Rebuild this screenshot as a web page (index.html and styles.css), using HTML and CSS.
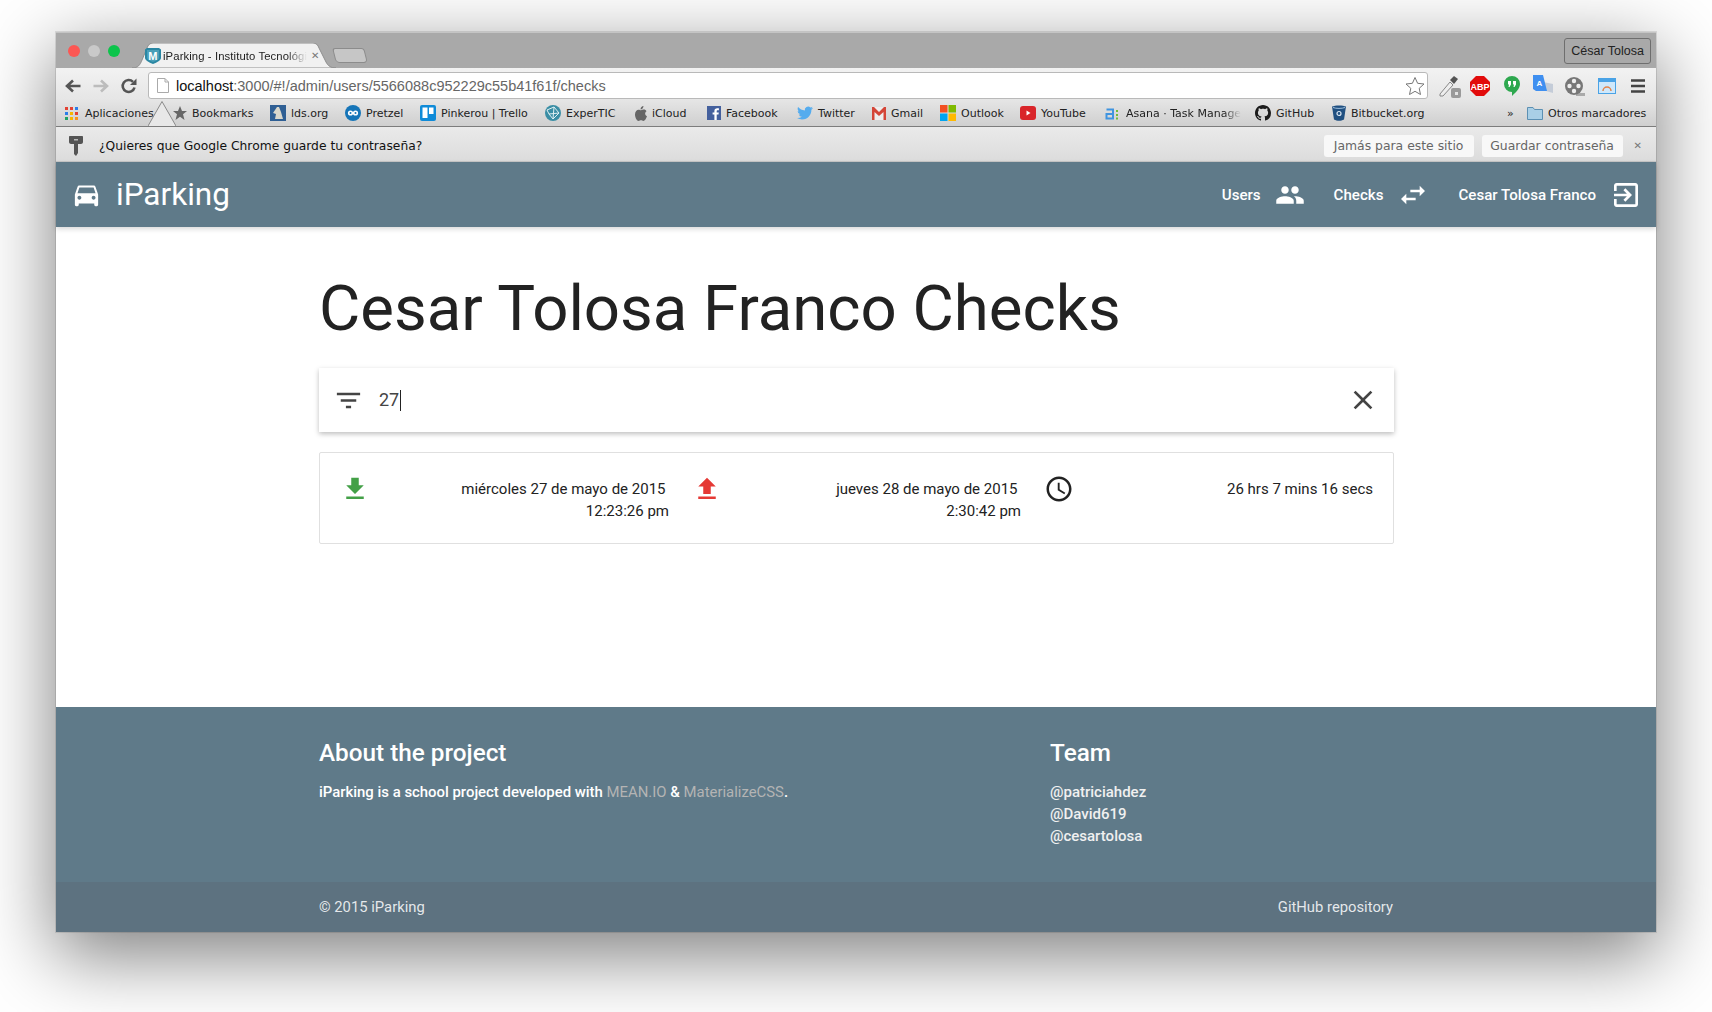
FILE: index.html
```html
<!DOCTYPE html>
<html lang="en">
<head>
    <meta charset="UTF-8">
    <meta name="viewport" content="width=device-width, initial-scale=1.0">
    <title>iParking - Instituto Tecnológico</title>
    <link rel="stylesheet" href="styles.css">
</head>
<body>
    <div class="window">
        <!-- browser chrome -->
        <div class="tabstrip">
            <div class="lights">
                <span class="light light-red"></span>
                <span class="light light-gray"></span>
                <span class="light light-green"></span>
            </div>
            <div class="tab">
                <svg class="tab-shape" viewBox="0 0 204 25" preserveAspectRatio="none"><path d="M0 25C6 25 8 22 10 17L15 5C16 2 18 0 21 0H181C184 0 186 2 187 5L194 19C196 23 199 25 204 25Z" fill="#f1f1f1" stroke="#8f8f8f"/></svg>
                <svg class="favicon" viewBox="0 0 16 16"><path d="M0 1.5L2 0H14L16 1.500V10C16 12.500 11 15 8 16C5 15 0 12.500 0 10Z" fill="#2a87a3"/><path d="M2 2H14V10C14 11.500 10.500 13 8 14C5.500 13 2 11.500 2 10Z" fill="#4a9fb8"/><text x="8" y="11.500" text-anchor="middle" class="favicon-letter">M</text></svg>
                <span class="tab-title">iParking - Instituto Tecnológi</span>
                <span class="tab-close">✕</span>
            </div>
            <div class="new-tab"></div>
            <div class="profile">César Tolosa</div>
        </div>

        <div class="toolbar">
            <button class="nav-btn">
                <svg viewBox="0 0 18 18" width="18" height="18"><path d="M16.500 9H4M9 3.500L3 9l6 5.500" fill="none" stroke="#555" stroke-width="2.600"/></svg>
            </button>
            <button class="nav-btn">
                <svg viewBox="0 0 18 18" width="18" height="18"><path d="M1.500 9H14M9 3.500L15 9l-6 5.500" fill="none" stroke="#bcbcbc" stroke-width="2.600"/></svg>
            </button>
            <button class="nav-btn">
                <svg viewBox="0 0 18 18" width="18" height="18"><path d="M14.500 10.500A6 6 0 1 1 13 4.800" fill="none" stroke="#555" stroke-width="2.600"/><path d="M16.500 1.500V8H10Z" fill="#555"/></svg>
            </button>
            <div class="omnibox">
                <svg class="page-icon" viewBox="0 0 12 15" width="12" height="15"><path d="M.5.500H8L11.500 4V14.500H.5Z" fill="#fff" stroke="#aaa"/><path d="M8 .5V4H11.500" fill="none" stroke="#aaa"/></svg>
                <span class="url"><b>localhost</b>:3000/#!/admin/users/5566088c952229c55b41f61f/checks</span>
                <svg class="star" viewBox="0 0 20 20" width="20" height="20"><path d="M10 1.500L12.600 7.300 19 8 14.200 12.300 15.500 18.500 10 15.300 4.500 18.500 5.800 12.300 1 8 7.400 7.300Z" fill="#fff" stroke="#777"/></svg>
            </div>
            <div class="extensions">
                <span class="ext"><svg viewBox="0 0 24 24" width="24" height="24"><path d="M3 20L13 8l3 3L6 22H3Z" fill="#eee" stroke="#888"/><path d="M13 6l4-4 4 3-4 5Z" fill="#555"/><rect x="14" y="14" width="10" height="10" rx="2" fill="#9a9a9a"/><rect x="18" y="18" width="3" height="3" fill="#e4e4e4"/></svg></span>
                <span class="ext"><svg viewBox="0 0 20 20" width="20" height="20"><path d="M6 0H14L20 6V14L14 20H6L0 14V6Z" fill="#e20b0b"/><text x="10" y="13.500" text-anchor="middle" class="abp-label">ABP</text></svg></span>
                <span class="ext"><svg viewBox="0 0 16 20" width="16" height="20"><path d="M8 0A8 8 0 0 1 16 8C16 13 11 17 8 20V16A8 8 0 0 1 8 0Z" fill="#2ea84f"/><path d="M4 5h3v3.500L5.500 11H4.500L5 8.500H4ZM9 5h3v3.500L10.500 11H9.500L10 8.500H9Z" fill="#fff"/></svg></span>
                <span class="ext"><svg viewBox="0 0 20 22" width="20" height="22"><path d="M10 7L20 9V18L13 16Z" fill="#c4ccd8"/><path d="M0 0H10L14 16H3L0 14Z" fill="#3f8ff0"/><text x="6.500" y="10.500" text-anchor="middle" class="translate-label">A</text></svg></span>
                <span class="ext"><svg viewBox="0 0 22 22" width="22" height="22"><path d="M12 18H21V21H12Z" fill="#aaa"/><circle cx="10" cy="11" r="9" fill="#777"/><circle cx="10" cy="6" r="2.200" fill="#eee"/><circle cx="10" cy="16" r="2.200" fill="#eee"/><circle cx="5.500" cy="11" r="2.200" fill="#eee"/><circle cx="14.500" cy="11" r="2.200" fill="#eee"/></svg></span>
                <span class="ext"><svg viewBox="0 0 18 16" width="18" height="16"><rect x=".5" y=".5" width="17" height="15" fill="#cfe8fb" stroke="#4aa3e6"/><rect x="0" y="0" width="18" height="4" fill="#4aa3e6"/><path d="M5 13A4 4 0 0 1 13 13" fill="none" stroke="#e2844a" stroke-width="1.500"/></svg></span>
                <span class="ext"><svg viewBox="0 0 14 14" width="14" height="14"><path d="M0 1.500H14M0 7H14M0 12.500H14" stroke="#444" stroke-width="2.600"/></svg></span>
            </div>
        </div>

        <div class="bookmarks">
            <div class="bm bm-apps">
                <svg class="bm-icon" viewBox="0 0 13 13" width="13" height="13"><path d="M0 0h3v3H0Z" fill="#e34133"/><path d="M5 0h3v3H5Z" fill="#e34133"/><path d="M10 0h3v3h-3Z" fill="#2b7de9"/><path d="M0 5h3v3H0Z" fill="#2b7de9"/><path d="M5 5h3v3H5Z" fill="#f7b500"/><path d="M10 5h3v3h-3Z" fill="#e34133"/><path d="M0 10h3v3H0Z" fill="#1fa463"/><path d="M5 10h3v3H5Z" fill="#f7b500"/><path d="M10 10h3v3h-3Z" fill="#f7941d"/></svg>
                <span>Aplicaciones</span>
            </div>
            <div class="bm">
                <svg class="bm-icon" viewBox="0 0 14 14" width="14" height="14"><path d="M7 0L9 5H14L10 8.300 11.500 14 7 10.700 2.500 14 4 8.300 0 5H5Z" fill="#666"/></svg>
                <span>Bookmarks</span>
            </div>
            <div class="bm">
                <svg class="bm-icon" viewBox="0 0 16 16" width="16" height="16"><rect width="16" height="16" fill="#2f5f94"/><path d="M7 2h2l2 5 2 7H5l1-5-3-1Z" fill="#d9d7cc"/></svg>
                <span>lds.org</span>
            </div>
            <div class="bm">
                <svg class="bm-icon" viewBox="0 0 16 16" width="16" height="16"><circle cx="8" cy="8" r="8" fill="#1675b8"/><circle cx="5.500" cy="8" r="2.600" fill="#fff"/><circle cx="10.500" cy="8" r="2.600" fill="#fff"/><circle cx="5.500" cy="8" r="1" fill="#1675b8"/><circle cx="10.500" cy="8" r="1" fill="#1675b8"/></svg>
                <span>Pretzel</span>
            </div>
            <div class="bm">
                <svg class="bm-icon" viewBox="0 0 16 16" width="16" height="16"><rect width="16" height="16" rx="2" fill="#0f8bd8"/><rect x="2.500" y="2.500" width="5" height="10.500" fill="#fff"/><rect x="9" y="2.500" width="4.500" height="6.500" fill="#fff"/></svg>
                <span>Pinkerou | Trello</span>
            </div>
            <div class="bm">
                <svg class="bm-icon" viewBox="0 0 16 16" width="16" height="16"><circle cx="8" cy="8" r="8" fill="#3a8ea5"/><path d="M2 5L9 2l5 6-6 6-4-5Zm7-3L8 14M4 9l10-1" fill="none" stroke="#dff0f3"/></svg>
                <span>ExperTIC</span>
            </div>
            <div class="bm">
                <svg class="bm-icon" viewBox="0 0 12 15" width="12" height="15"><path d="M8.500 0C8.500 2 7 3.500 5.500 3.400 5.500 1.500 7 .2 8.500 0ZM6 4.200C7 4.200 7.700 3.600 8.800 3.600 10 3.600 11 4.300 11.500 5.200 9.500 6.500 9.800 9.300 12 10.200 11.300 12.200 9.800 15 8.400 15 7.400 15 7 14.300 6 14.300 5 14.300 4.500 15 3.600 15 2 15 0 11.500 0 8.500 0 5.500 1.900 3.700 3.600 3.700 4.700 3.700 5.300 4.200 6 4.200Z" fill="#666"/></svg>
                <span>iCloud</span>
            </div>
            <div class="bm">
                <svg class="bm-icon" viewBox="0 0 14 14" width="14" height="14"><rect width="14" height="14" fill="#44609d"/><path d="M9.700 14V8.600H11.500L11.800 6.500H9.700V5.200C9.700 4.600 9.900 4.200 10.700 4.200H11.900V2.300C11.700 2.300 11 2.200 10.200 2.200 8.500 2.200 7.400 3.200 7.400 5V6.500H5.600V8.600H7.400V14Z" fill="#fff"/></svg>
                <span>Facebook</span>
            </div>
            <div class="bm">
                <svg class="bm-icon" viewBox="0 0 24 24" width="16" height="16"><path d="M23.953 4.57a10 10 0 01-2.825.775 4.958 4.958 0 002.163-2.723c-.951.555-2.005.959-3.127 1.184a4.92 4.92 0 00-8.384 4.482C7.69 8.095 4.067 6.13 1.64 3.162a4.822 4.822 0 00-.666 2.475c0 1.71.87 3.213 2.188 4.096a4.904 4.904 0 01-2.228-.616v.06a4.923 4.923 0 003.946 4.827 4.996 4.996 0 01-2.212.085 4.936 4.936 0 004.604 3.417 9.867 9.867 0 01-6.102 2.105c-.39 0-.779-.023-1.17-.067a13.995 13.995 0 007.557 2.209c9.053 0 13.998-7.496 13.998-13.985 0-.21 0-.42-.015-.63A9.935 9.935 0 0024 4.59z" fill="#55acee"/></svg>
                <span>Twitter</span>
            </div>
            <div class="bm">
                <svg class="bm-icon" viewBox="0 0 14 13" width="14" height="13"><rect width="14" height="13" fill="#eee"/><path d="M0 0H2L7 5 12 0H14V13H11.500V5L7 9 2.500 5V13H0Z" fill="#d44638"/></svg>
                <span>Gmail</span>
            </div>
            <div class="bm">
                <svg class="bm-icon" viewBox="0 0 16 16" width="16" height="16"><rect width="7.500" height="7.500" fill="#f25022"/><rect x="8.500" width="7.500" height="7.500" fill="#7fba00"/><rect y="8.500" width="7.500" height="7.500" fill="#00a4ef"/><rect x="8.500" y="8.500" width="7.500" height="7.500" fill="#ffb900"/></svg>
                <span>Outlook</span>
            </div>
            <div class="bm">
                <svg class="bm-icon" viewBox="0 0 16 14" width="16" height="14"><rect width="16" height="14" rx="3" fill="#d9252a"/><path d="M6.500 4.500L10.500 7 6.500 9.500Z" fill="#fff"/></svg>
                <span>YouTube</span>
            </div>
            <div class="bm">
                <svg class="bm-icon" viewBox="0 0 16 13" width="16" height="13"><path d="M1.500 2.500H8V11.500H1.500V7H8" fill="none" stroke="#3f94e0" stroke-width="2"/><path d="M11 3h2v2h-2ZM11 7h2v2h-2ZM11 10.500h2v2h-2Z" fill="#6fbf3a"/></svg>
                <span class="bm-fade">Asana · Task Manage</span>
            </div>
            <div class="bm">
                <svg class="bm-icon" viewBox="0 0 16 16" width="16" height="16"><path d="M8 0C3.58 0 0 3.58 0 8c0 3.54 2.29 6.53 5.47 7.59.4.07.55-.17.55-.38 0-.19-.01-.82-.01-1.49-2.01.37-2.53-.49-2.69-.94-.09-.23-.48-.94-.82-1.13-.28-.15-.68-.52-.01-.53.63-.01 1.08.58 1.23.82.72 1.21 1.87.87 2.33.66.07-.52.28-.87.51-1.07-1.78-.2-3.64-.89-3.64-3.95 0-.87.31-1.59.82-2.15-.08-.2-.36-1.02.08-2.12 0 0 .67-.21 2.2.82.64-.18 1.32-.27 2-.27.68 0 1.36.09 2 .27 1.53-1.04 2.2-.82 2.2-.82.44 1.1.16 1.92.08 2.12.51.56.82 1.27.82 2.15 0 3.07-1.87 3.75-3.65 3.95.29.25.54.73.54 1.48 0 1.07-.01 1.93-.01 2.2 0 .21.15.46.55.38A8.013 8.013 0 0016 8c0-4.42-3.58-8-8-8z" fill="#1b1b1b"/></svg>
                <span>GitHub</span>
            </div>
            <div class="bm">
                <svg class="bm-icon" viewBox="0 0 14 16" width="14" height="16"><path d="M0 1.500C3 0 11 0 14 1.500L12 14.500C9 16.300 5 16.300 2 14.500Z" fill="#205081"/><path d="M1 2.500C4 3.700 10 3.700 13 2.500" stroke="#9fc0de" fill="none"/><circle cx="7" cy="8.500" r="2" fill="none" stroke="#dce8f3" stroke-width="1.200"/></svg>
                <span>Bitbucket.org</span>
            </div>
            <div class="bm bm-more">»</div>
            <div class="bm">
                <svg class="bm-icon" viewBox="0 0 16 14" width="16" height="14"><path d="M.5 13.500V1.500H6L7.500 3.500H15.500V13.500Z" fill="#a9cfe6" stroke="#5c90b3"/></svg>
                <span>Otros marcadores</span>
            </div>
            <!-- little pointer of the password bubble -->
            <svg class="bubble-tip" viewBox="0 0 28 26" width="28" height="26"><path d="M0 25L14 .5 28 25Z" fill="#e8e8e8"/><path d="M0 25L14 .5 28 25" fill="none" stroke="#8a8a8a"/></svg>
        </div>

        <div class="infobar">
            <svg class="key" viewBox="0 0 14 20" width="14" height="20"><path d="M0 1C0 .4.4 0 1 0H13C13.600 0 14 .4 14 1V6C14 7 13 8 12 8H9V17L7 20 5 18V8H2C1 8 0 7 0 6Z" fill="#555"/><rect x="5" y="3" width="4" height="1.500" fill="#bbb"/></svg>
            <span class="infobar-text">¿Quieres que Google Chrome guarde tu contraseña?</span>
            <button class="infobar-btn">Jamás para este sitio</button>
            <button class="infobar-btn infobar-btn-save">Guardar contraseña</button>
            <span class="infobar-close">✕</span>
        </div>

        <!-- the page itself -->
        <nav class="navbar">
            <a class="brand">
                <svg class="icon" viewBox="0 0 24 24" width="31" height="31"><path d="M18.92 6.01C18.72 5.42 18.16 5 17.5 5h-11c-.66 0-1.21.42-1.42 1.01L3 12v8c0 .55.45 1 1 1h1c.55 0 1-.45 1-1v-1h12v1c0 .55.45 1 1 1h1c.55 0 1-.45 1-1v-8l-2.08-5.99zM6.5 16c-.83 0-1.5-.67-1.5-1.5S5.67 13 6.5 13s1.5.67 1.5 1.5S7.33 16 6.500 16zm11 0c-.83 0-1.5-.67-1.5-1.5s.67-1.5 1.5-1.5 1.5.67 1.5 1.500-.67 1.5-1.500 1.500zM5 11l1.500-4.500h11L19 11H5z"/></svg>
                <span class="brand-name">iParking</span>
            </a>
            <div class="nav-links">
                <a class="nav-link">Users <svg class="icon" viewBox="0 0 24 24" width="30" height="30"><path d="M16 11c1.66 0 2.99-1.34 2.99-3S17.66 5 16 5c-1.66 0-3 1.34-3 3s1.34 3 3 3zm-8 0c1.66 0 2.99-1.34 2.99-3S9.66 5 8 5C6.34 5 5 6.34 5 8s1.34 3 3 3zm0 2c-2.33 0-7 1.17-7 3.5V19h14v-2.500c0-2.33-4.67-3.5-7-3.500zm8 0c-.29 0-.62.02-.97.05 1.16.84 1.97 1.97 1.97 3.45V19h6v-2.500c0-2.33-4.67-3.5-7-3.500z"/></svg></a>
                <a class="nav-link">Checks <svg class="icon" viewBox="0 0 24 24" width="32" height="32"><path d="M6.990 11L3 15l3.990 4v-3H14v-2H6.990v-3zM21 9l-3.990-4v3H10v2h7.010v3L21 9z"/></svg></a>
                <a class="nav-link">Cesar Tolosa Franco <svg class="icon" viewBox="0 0 24 24" width="32" height="32"><path d="M10.090 15.590L11.500 17l5-5-5-5-1.410 1.410L12.670 11H3v2h9.670l-2.580 2.590zM19 3H5c-1.110 0-2 .9-2 2v4h2V5h14v14H5v-4H3v4c0 1.100.89 2 2 2h14c1.100 0 2-.9 2-2V5c0-1.100-.9-2-2-2z"/></svg></a>
            </div>
        </nav>

        <main class="content">
            <h1 class="page-title">Cesar Tolosa Franco Checks</h1>

            <div class="search">
                <svg class="search-icon" viewBox="0 0 24 24" width="31" height="31"><path d="M10 18h4v-2h-4v2zM3 6v2h18V6H3zm3 7h12v-2H6v2z"/></svg>
                <span class="search-value">27</span>
                <span class="caret"></span>
                <svg class="search-icon search-clear" viewBox="0 0 24 24" width="32" height="32"><path d="M19 6.410L17.590 5 12 10.590 6.410 5 5 6.410 10.590 12 5 17.590 6.410 19 12 13.410 17.590 19 19 17.590 13.410 12z"/></svg>
            </div>

            <div class="check-card">
                <div class="check-cell">
                    <svg class="check-icon in" viewBox="0 0 24 24" width="30" height="30"><path d="M19 9h-4V3H9v6H5l7 7 7-7zM5 18v2h14v-2H5z"/></svg>
                    <div class="check-text">
                        <span class="check-date">miércoles 27 de mayo de 2015</span>
                        <span>12:23:26 pm</span>
                    </div>
                </div>
                <div class="check-cell">
                    <svg class="check-icon out" viewBox="0 0 24 24" width="30" height="30"><path d="M9 16h6v-6h4l-7-7-7 7h4zm-4 2h14v2H5z"/></svg>
                    <div class="check-text">
                        <span class="check-date">jueves 28 de mayo de 2015</span>
                        <span>2:30:42 pm</span>
                    </div>
                </div>
                <div class="check-cell">
                    <svg class="check-icon" viewBox="0 0 24 24" width="30" height="30"><path d="M11.990 2C6.470 2 2 6.480 2 12s4.470 10 9.990 10C17.520 22 22 17.520 22 12S17.520 2 11.990 2zM12 20c-4.420 0-8-3.580-8-8s3.580-8 8-8 8 3.580 8 8-3.580 8-8 8zm.5-13H11v6l5.250 3.150.75-1.230-4.500-2.670z"/></svg>
                    <div class="check-text">
                        <span>26 hrs 7 mins 16 secs</span>
                    </div>
                </div>
            </div>
        </main>

        <footer class="footer">
            <div class="footer-main">
                <div class="footer-about">
                    <h5>About the project</h5>
                    <p>iParking is a school project developed with <a>MEAN.IO</a> &amp; <a>MaterializeCSS</a>.</p>
                </div>
                <div class="footer-team">
                    <h5>Team</h5>
                    <ul>
                        <li>@patriciahdez</li>
                        <li>@David619</li>
                        <li>@cesartolosa</li>
                    </ul>
                </div>
            </div>
            <div class="footer-copyright">
                <span>© 2015 iParking</span>
                <span>GitHub repository</span>
            </div>
        </footer>
    </div>
</body>
</html>
```

FILE: styles.css
```css
* {
    box-sizing: border-box;
}
html, body {
    margin: 0;
    height: 100%;
}
body {
    padding: 32px 56px 80px;
    background-color: #fff;
    font-family: Roboto, sans-serif;
    font-size: 15px;
    color: #222;
    overflow: hidden;
}
.window {
    display: flex;
    flex-direction: column;
    height: 900px;
    background: #fff;
    box-shadow: 0 0 0 1px rgba(0,0,0,0.1), 0 22px 70px 2px rgba(0,0,0,0.5);
}

/* tab strip */
.tabstrip {
    position: relative;
    display: flex;
    align-items: flex-end;
    height: 36px;
    background-color: #a9a9a9;
    border-top: 1px solid #c4c4c4;
    font-family: "DejaVu Sans", sans-serif;
}
.lights {
    display: flex;
    gap: 8px;
    align-self: flex-start;
    margin: 12px 0 0 12px;
}
.light {
    width: 12px;
    height: 12px;
    border-radius: 50%;
}
.light-red { background-color: #fc5753; }
.light-gray { background-color: #c9c9c9; }
.light-green { background-color: #0cc44b; }
.tab {
    position: relative;
    display: flex;
    align-items: center;
    width: 204px;
    height: 25px;
    margin-left: 12px;
    padding: 0 17px 0 13px;
    font-family: "Liberation Sans", sans-serif;
    font-size: 11.3px;
    letter-spacing: 0.1px;
    color: #222;
}
.tab-shape {
    position: absolute;
    top: 0;
    left: 0;
    width: 100%;
    height: 100%;
}
.favicon {
    position: relative;
    flex: none;
    width: 16px;
    height: 16px;
    margin-right: 2px;
}
.favicon-letter {
    font-family: "Liberation Sans", sans-serif;
    font-size: 11px;
    font-weight: bold;
    fill: #fff;
}
.tab-title {
    position: relative;
    flex: 1;
    white-space: nowrap;
    -webkit-mask-image: linear-gradient(to right, #000 86%, transparent 100%);
    mask-image: linear-gradient(to right, #000 86%, transparent 100%);
}
.tab-close {
    position: relative;
    margin-left: 4px;
    font-size: 10px;
    color: #777;
}
.new-tab {
    width: 32px;
    height: 15px;
    margin: 0 0 5px -2px;
    background-color: #c6c6c6;
    border: 1px solid #8c8c8c;
    border-radius: 3px 3px 4px 4px;
    transform: skewX(14deg);
}
.profile {
    align-self: flex-start;
    margin: 5px 5px 0 auto;
    padding: 0 6px;
    height: 26px;
    line-height: 24px;
    font-family: "Liberation Sans", sans-serif;
    font-size: 12.5px;
    color: #222;
    border: 1px solid #6e6e6e;
    border-radius: 3px;
}

/* toolbar */
.toolbar {
    display: flex;
    align-items: center;
    height: 31px;
    padding: 4px 2px 0 3px;
    background: linear-gradient(#f2f2f2, #e6e6e6);
}
.nav-btn {
    display: flex;
    align-items: center;
    justify-content: center;
    width: 28px;
    height: 27px;
    padding: 0;
    background: none;
    border: none;
}
.omnibox {
    display: flex;
    flex: 1;
    align-items: center;
    height: 27px;
    margin: 0 5px;
    padding: 0 2px 0 8px;
    background-color: #fff;
    border: 1px solid #b9b9b9;
    border-radius: 3px;
}
.page-icon {
    flex: none;
    margin-right: 7px;
}
.url {
    flex: 1;
    font-family: "Liberation Sans", sans-serif;
    font-size: 14.5px;
    color: #666;
}
.url b {
    font-weight: normal;
    color: #111;
}
.extensions {
    display: grid;
    grid-template-columns: repeat(7, 31.6px);
}
.ext {
    display: flex;
    align-items: center;
    justify-content: center;
}
.abp-label {
    font-family: "Liberation Sans", sans-serif;
    font-size: 9px;
    font-weight: bold;
    fill: #fff;
}
.translate-label {
    font-family: "Liberation Sans", sans-serif;
    font-size: 8px;
    font-weight: bold;
    fill: #fff;
}

/* bookmarks */
.bookmarks {
    position: relative;
    display: grid;
    grid-template-columns: 108px 97px 75px 75px 125px 90px 72px 90px 75px 68px 80px 85px 150px 77px 175px 20px 1fr;
    align-items: center;
    height: 28px;
    padding: 1px 0 0 9px;
    background: linear-gradient(#e6e6e6, #cfcfcf);
    border-bottom: 1px solid #7c7c7c;
    font-family: "DejaVu Sans", sans-serif;
    font-size: 11px;
    color: #222;
}
.bm {
    display: flex;
    align-items: center;
    gap: 5px;
    white-space: nowrap;
}
.bm-apps {
    gap: 7px;
}
.bm-icon {
    flex: none;
}
.bm-fade {
    -webkit-mask-image: linear-gradient(to right, #000 85%, transparent 100%);
    mask-image: linear-gradient(to right, #000 85%, transparent 100%);
}
.bubble-tip {
    position: absolute;
    left: 92px;
    bottom: -1px;
}

/* password infobar */
.infobar {
    display: flex;
    align-items: center;
    height: 35px;
    padding: 3px 14px 0 13px;
    background: linear-gradient(#eaeaea, #dcdcdc);
    border-bottom: 1px solid #c8c8c8;
    font-family: "DejaVu Sans", sans-serif;
    font-size: 12.3px;
    color: #111;
}
.key {
    flex: none;
}
.infobar-text {
    flex: 1;
    margin-left: 16px;
}
.infobar-btn {
    height: 22px;
    width: 150px;
    padding: 0;
    margin-right: 8px;
    background-color: #f8f8f8;
    border: none;
    border-radius: 3px;
    font-family: "DejaVu Sans", sans-serif;
    font-size: 12.4px;
    color: #666;
}
.infobar-btn-save {
    width: 141px;
    margin-right: 11px;
}
.infobar-close {
    font-size: 10px;
    color: #777;
}

/* navbar */
.navbar {
    display: flex;
    flex: none;
    align-items: center;
    justify-content: space-between;
    height: 65px;
    padding: 0 14px 0 15px;
    background-color: #5f7a89;
    color: #fff;
    box-shadow: 0 2px 5px rgba(0,0,0,0.16);
}
.icon {
    flex: none;
    fill: #fff;
}
.brand {
    display: flex;
    align-items: center;
    gap: 14px;
}
.brand-name {
    font-size: 31.5px;
}
.nav-links {
    display: flex;
    align-items: center;
    gap: 29px;
}
.nav-link {
    display: flex;
    align-items: center;
    gap: 14px;
    font-size: 15.1px;
    font-weight: 500;
}

/* content */
.content {
    flex: 1;
    width: 1075px;
    margin-left: 263px;
}
.page-title {
    margin: 47px 0 25px;
    font-size: 63.5px;
    font-weight: 400;
    line-height: 69px;
    color: #222;
}
.search {
    display: flex;
    align-items: center;
    height: 64px;
    padding: 0 15px 0 14px;
    background-color: #fff;
    box-shadow: 0 2px 5px rgba(0,0,0,0.26);
}
.search-icon {
    flex: none;
    fill: #444;
}
.search-value {
    margin-left: 15px;
    padding-bottom: 2px;
    font-size: 18px;
    color: #444;
}
.caret {
    width: 1px;
    height: 21px;
    margin-left: 1px;
    background-color: #222;
}
.search-clear {
    margin-left: auto;
}
.check-card {
    display: grid;
    grid-template-columns: repeat(3, 352px);
    height: 92px;
    margin-top: 20px;
    padding: 21px 0 0 20px;
    border: 1px solid #e0e0e0;
    border-radius: 2px;
}
.check-cell {
    display: flex;
    align-items: flex-start;
    padding-right: 23px;
}
.check-icon {
    flex: none;
    fill: #222;
}
.check-icon.in { fill: #43a047; }
.check-icon.out { fill: #e53935; }
.check-text {
    flex: 1;
    padding-top: 4px;
    line-height: 22px;
    text-align: right;
}
.check-text span {
    display: block;
}
.check-date {
    margin-right: 3.5px;
}

/* footer */
.footer {
    flex: none;
    background-color: #5f7a89;
    color: #fff;
}
.footer-main {
    display: flex;
    height: 175px;
    padding: 29px 0 0 263px;
}
.footer h5 {
    margin: 0 0 11px;
    font-size: 24.3px;
    font-weight: 500;
    line-height: 34px;
}
.footer p {
    margin: 0;
    font-size: 14.9px;
    line-height: 22px;
    font-weight: 500;
}
.footer p a {
    font-weight: 400;
    color: #b4b4b4;
}
.footer-about {
    width: 731px;
}
.footer-team ul {
    margin: 0;
    padding: 0;
    list-style: none;
    line-height: 22px;
    font-weight: 500;
    color: #f0f0f0;
}
.footer-copyright {
    display: flex;
    align-items: center;
    justify-content: space-between;
    height: 50px;
    padding: 0 263px;
    background-color: #5d7280;
    font-size: 14.8px;
    color: rgba(255,255,255,0.85);
}
```
